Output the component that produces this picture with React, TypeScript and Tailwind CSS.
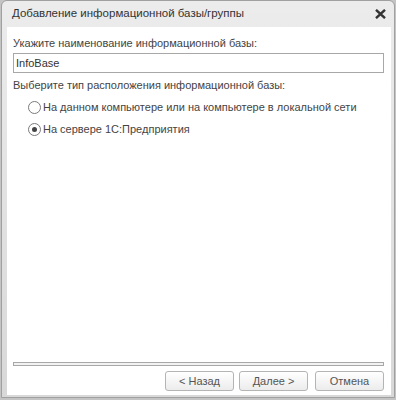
export default function App() {
  return (
    <div
      className="w-[396px] h-[400px] bg-[#c4c4c4] overflow-hidden text-[11px] text-[#444]"
      style={{ fontFamily: '"Liberation Sans", Arial, sans-serif' }}
    >
      <div className="ml-[1px] w-[394px] h-[398px] rounded-t-[6px] border border-[#a0a0a0] bg-gradient-to-b from-[#ececec] to-[#d8d8d8] flex flex-col">
        {/* Title bar */}
        <div className="h-[26px] flex items-center justify-between pl-[10px] pr-[8px]">
          <span className="text-[#333] text-[11.5px]">Добавление информационной базы/группы</span>
          <svg width="11" height="10" viewBox="0 0 11 10">
            <path d="M1 0.8 L10 9.2 M10 0.8 L1 9.2" stroke="#333" strokeWidth="2.4" />
          </svg>
        </div>

        {/* Body */}
        <div className="flex-1 ml-[5px] mr-[3px] mb-[2px] bg-white flex flex-col pl-[6px] pr-[7px] pt-[8px] pb-[4px]">
          <div className="leading-[16px]">Укажите наименование информационной базы:</div>
          <div className="mt-[2px] h-[20px] border border-[#a8a8a8] flex items-center px-[2px] text-[#333]">
            InfoBase
          </div>
          <div className="mt-[4px] leading-[16px]">Выберите тип расположения информационной базы:</div>

          <div className="mt-[6px] pl-[15px] flex flex-col gap-[6px]">
            <label className="flex items-center gap-[2px] h-[16px]">
              <span className="w-[13px] h-[13px] rounded-full border border-[#7a7a7a] bg-white" />
              <span>На данном компьютере или на компьютере в локальной сети</span>
            </label>
            <label className="flex items-center gap-[2px] h-[16px]">
              <span className="w-[13px] h-[13px] rounded-full border border-[#7a7a7a] bg-white flex items-center justify-center">
                <span className="w-[5px] h-[5px] rounded-full bg-[#444]" />
              </span>
              <span>На сервере 1С:Предприятия</span>
            </label>
          </div>

          <div className="flex-1" />

          <div className="h-[4px] border border-[#a8a8a8] bg-[#f2f2f2]" />

          <div className="mt-[5px] flex justify-end gap-[5px]">
            <button className="w-[69px] h-[20px] rounded-[3px] border border-[#b4b4b4] bg-gradient-to-b from-white to-[#ececec] text-[#555] text-[11px]">
              &lt; Назад
            </button>
            <button className="w-[69px] h-[20px] rounded-[3px] border border-[#b4b4b4] bg-gradient-to-b from-white to-[#ececec] text-[#555] text-[11px] mr-[2px]">
              Далее &gt;
            </button>
            <button className="w-[69px] h-[20px] rounded-[3px] border border-[#b4b4b4] bg-gradient-to-b from-white to-[#ececec] text-[#555] text-[11px]">
              Отмена
            </button>
          </div>
        </div>
      </div>
    </div>
  );
}
